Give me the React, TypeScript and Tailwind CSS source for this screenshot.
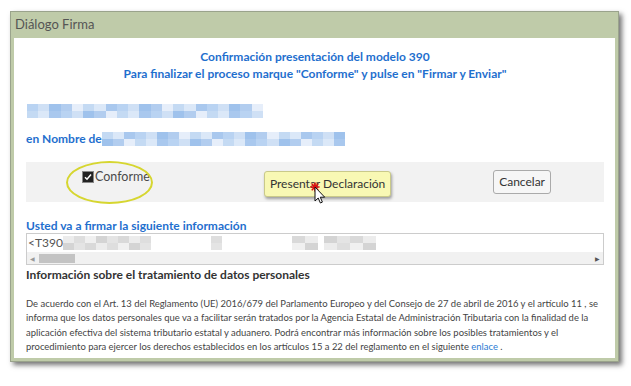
import React from 'react'

const blues = ['#cfe0f5', '#b9d3f2', '#a9c8ee', '#dbe8f8', '#c4daf3', '#e6eefa', '#b2cdef', '#9fc2ec']
const grays = ['#e4e4e4', '#d9d9d9', '#ececec', '#dedede', '#f0f0f0', '#d4d4d4']

const Blur = ({ width, rows, palette, seed }: { width: number; rows: number; palette: string[]; seed: number }) => {
  const cells: React.ReactNode[] = []
  const count = Math.floor(width / 11)
  for (let r = 0; r < rows; r++) {
    const row: React.ReactNode[] = []
    for (let i = 0; i < count; i++) {
      const c = palette[(i * 7 + r * 3 + seed) % palette.length]
      row.push(<div key={i} className="h-full flex-1" style={{ backgroundColor: c }} />)
    }
    cells.push(
      <div key={r} className="flex h-[7px]">
        {row}
      </div>
    )
  }
  return (
    <div className="flex flex-col" style={{ width }}>
      {cells}
    </div>
  )
}

const Cursor = () => (
  <svg width="22" height="24" viewBox="0 0 22 24" className="absolute left-[46px] top-[12px]">
    <g stroke="#e01010" strokeWidth="1.6" strokeLinecap="round">
      <path d="M5 1v8M1 5h8M2.2 2.2l5.6 5.6M7.8 2.2 2.2 7.8" />
    </g>
    <path
      d="M5 5v14l3.2-3 2.2 5 2-0.9-2.1-4.9h4.4z"
      fill="#fff"
      stroke="#111"
      strokeWidth="1"
      strokeLinejoin="round"
    />
  </svg>
)

export default function App() {
  return (
    <div className="w-[631px] h-[386px] bg-white pt-[11px] pl-[10px] font-['Lato','Open_Sans',sans-serif]">
      <div className="w-[609px] border border-[#9aa38c] bg-[#bfcba9] px-[3px] pb-[3px] shadow-[3px_3px_5px_rgba(0,0,0,0.55)]">
        <div className="h-[26px] flex items-center px-[1px] text-[13px] text-[#555]">Diálogo Firma</div>
        <div className="bg-white pl-[12px] pr-[11px] pt-[10px] pb-[4px]">
          <div className="text-center text-[12px] font-bold leading-[17px] text-[#1f6fce]">
            <div>Confirmación presentación del modelo 390</div>
            <div>Para finalizar el proceso marque "Conforme" y pulse en "Firmar y Enviar"</div>
          </div>

          <div className="mt-[22px] ml-[1px]">
            <Blur width={236} rows={2} palette={blues} seed={1} />
          </div>

          <div className="mt-[12px] flex items-center">
            <span className="text-[12px] font-bold text-[#1f6fce]">en Nombre de</span>
            <Blur width={243} rows={2} palette={blues} seed={4} />
          </div>

          <div className="mt-[14px] h-[40px] bg-[#f2f2f2] relative flex items-center">
            <div className="absolute left-[40px] top-[-1px] w-[87px] h-[43px] rounded-[50%] border-2 border-[#d6d630]" />
            <label className="ml-[56px] flex items-center text-[12.5px] text-[#4a4a4a] -mt-[10px]">
              <span className="w-[12px] h-[12px] bg-[#222] border border-[#888] flex items-center justify-center">
                <svg width="8" height="8" viewBox="0 0 8 8">
                  <path d="M1 4.2l2 2L7 1.5" stroke="#fff" strokeWidth="1.5" fill="none" />
                </svg>
              </span>
              <span className="ml-[1px]">Conforme</span>
            </label>
            <div className="relative ml-[114px] mt-[2px]">
              <button className="h-[26px] px-[5px] bg-[#f8f8b4] border border-[#c9c98a] rounded-[3px] text-[12px] text-[#333] shadow-[1px_2px_3px_rgba(0,0,0,0.35)]">
                Presentar Declaración
              </button>
              <Cursor />
            </div>
            <button className="ml-auto mr-[53px] h-[24px] px-[5px] bg-[#f6f6f6] border border-[#aaa] rounded-[3px] text-[12px] text-[#333]">
              Cancelar
            </button>
          </div>

          <div className="mt-[16px] text-[12px] font-bold text-[#1f6fce] leading-[15px]">
            Usted va a firmar la siguiente información
          </div>
          <div className="h-[32px] border border-[#ccc] flex flex-col">
            <div className="h-[18px] flex items-center text-[12px] text-[#555] px-[1px]">
              <span>&lt;T390</span>
              <Blur width={88} rows={2} palette={grays} seed={2} />
              <div className="w-[60px]" />
              <Blur width={11} rows={2} palette={grays} seed={3} />
              <div className="w-[70px]" />
              <Blur width={26} rows={2} palette={grays} seed={1} />
              <div className="w-[6px]" />
              <Blur width={52} rows={2} palette={grays} seed={5} />
            </div>
            <div className="h-[12px] bg-[#f1f1f1] flex items-center px-[3px]">
              <span className="text-[6px] text-[#999]">◀</span>
              <div className="ml-[4px] w-[36px] h-[9px] bg-[#c3c3c3]" />
              <span className="ml-auto text-[6px] text-[#555]">▶</span>
            </div>
          </div>

          <div className="mt-[2px] text-[12px] font-bold text-[#333] leading-[16px]">
            Información sobre el tratamiento de datos personales
          </div>

          <p className="mt-[14px] text-[9.45px] leading-[14.3px] text-[#444] whitespace-nowrap">
            De acuerdo con el Art. 13 del Reglamento (UE) 2016/679 del Parlamento Europeo y del Consejo de 27 de abril de 2016 y el artículo 11 , se
            <br />
            informa que los datos personales que va a facilitar serán tratados por la Agencia Estatal de Administración Tributaria con la finalidad de la
            <br />
            aplicación efectiva del sistema tributario estatal y aduanero. Podrá encontrar más información sobre los posibles tratamientos y el
            <br />
            procedimiento para ejercer los derechos establecidos en los artículos 15 a 22 del reglamento en el siguiente{' '}
            <span className="text-[#2a7ad2]">enlace</span> .
          </p>
        </div>
      </div>
    </div>
  )
}
